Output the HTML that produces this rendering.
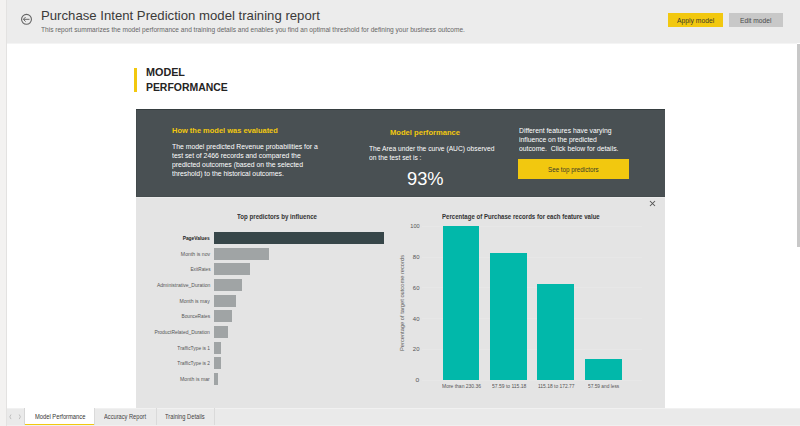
<!DOCTYPE html>
<html><head><meta charset="utf-8"><style>
html,body{margin:0;padding:0;width:800px;height:426px;overflow:hidden;background:#fff;}
body{position:relative;font-family:"Liberation Sans", sans-serif;}
.t{position:absolute;white-space:pre;}
.r{position:absolute;}
</style></head><body>
<div class="r" style="left:0.00px;top:0.00px;width:6.00px;height:426.00px;background:#f3f2f1;"></div>
<div class="r" style="left:6.00px;top:0.00px;width:1.00px;height:426.00px;background:#e3e2e1;"></div>
<div class="r" style="left:7.00px;top:0.00px;width:793.00px;height:43.00px;background:#ececec;"></div>
<div class="r" style="left:7.00px;top:43.00px;width:790.00px;height:1.00px;background:#f4f4f4;"></div>
<svg class="r" style="left:20px;top:13px" width="13" height="13" viewBox="0 0 13 13"><circle cx="6.5" cy="6.3" r="4.95" fill="none" stroke="#666" stroke-width="1.1"/><path d="M3.4 6.3H9.5M5.6 4.0L3.4 6.3L5.6 8.6" fill="none" stroke="#666" stroke-width="1"/></svg>
<div class="t" style="left:41.09px;transform-origin:left top;top:9.49px;font-size:13.60px;line-height:13.60px;color:#3b3a39;font-weight:400;transform:scaleX(0.9684);">Purchase Intent Prediction model training report</div>
<div class="t" style="left:40.79px;transform-origin:left top;top:26.32px;font-size:7.00px;line-height:7.00px;color:#666;font-weight:400;transform:scaleX(0.9384);">This report summarizes the model performance and training details and enables you find an optimal threshold for defining your business outcome.</div>
<div class="r" style="left:668.00px;top:13.00px;width:55.00px;height:14.00px;background:#f2c80f;"></div>
<div class="t" style="left:676.70px;transform-origin:left top;top:18.13px;font-size:6.70px;line-height:6.70px;color:#3a3a2a;font-weight:400;transform:scaleX(1.0133);">Apply model</div>
<div class="r" style="left:729.00px;top:13.00px;width:54.00px;height:14.00px;background:#c8c8c8;"></div>
<div class="t" style="left:739.90px;transform-origin:left top;top:18.38px;font-size:6.70px;line-height:6.70px;color:#4a4a4a;font-weight:400;transform:scaleX(0.9934);">Edit model</div>
<div class="r" style="left:797.00px;top:44.00px;width:3.00px;height:203.00px;background:#c8c8c8;"></div>
<div class="r" style="left:134.00px;top:68.00px;width:3.00px;height:24.00px;background:#f2c80f;"></div>
<div class="t" style="left:145.94px;transform-origin:left top;top:67.75px;font-size:10.45px;line-height:10.45px;color:#252423;font-weight:700;transform:scaleX(1.0338);">MODEL</div>
<div class="t" style="left:145.94px;transform-origin:left top;top:82.50px;font-size:10.45px;line-height:10.45px;color:#252423;font-weight:700;">PERFORMANCE</div>
<div class="r" style="left:136.00px;top:109.00px;width:529.00px;height:88.00px;background:#495053;"></div>
<div class="r" style="left:136.00px;top:109.00px;width:529.00px;height:1.00px;background:#363e40;"></div>
<div class="r" style="left:136.00px;top:110.00px;width:1.00px;height:87.00px;background:#42494b;"></div>
<div class="r" style="left:136.00px;top:196.00px;width:529.00px;height:1.00px;background:#454c4e;"></div>
<div class="t" style="left:172.38px;transform-origin:left top;top:127.14px;font-size:7.40px;line-height:7.40px;color:#f2c80f;font-weight:700;transform:scaleX(1.0106);">How the model was evaluated</div>
<div class="t" style="left:172.39px;transform-origin:left top;top:142.81px;font-size:7.10px;line-height:9.05px;color:#fff;font-weight:400;transform:scaleX(0.9655);">The model predicted Revenue probabilities for a
test set of 2466 records and compared the
predicted outcomes (based on the selected
threshold) to the historical outcomes.</div>
<div class="t" style="left:389.68px;transform-origin:left top;top:128.64px;font-size:7.40px;line-height:7.40px;color:#f2c80f;font-weight:700;transform:scaleX(1.0272);">Model performance</div>
<div class="t" style="left:368.79px;transform-origin:left top;top:145.37px;font-size:7.00px;line-height:8.80px;color:#fff;font-weight:400;transform:scaleX(0.9565);">The Area under the curve (AUC) observed
on the test set is :</div>
<div class="t" style="left:406.96px;transform-origin:left top;top:171.05px;font-size:17.90px;line-height:17.90px;color:#fff;font-weight:400;transform:scaleX(1.0213);">93%</div>
<div class="t" style="left:519.49px;transform-origin:left top;top:125.57px;font-size:7.00px;line-height:9.20px;color:#fff;font-weight:400;transform:scaleX(0.9718);">Different features have varying
influence on the predicted
outcome.  Click below for details.</div>
<div class="r" style="left:518.00px;top:159.00px;width:111.00px;height:20.00px;background:#f2c80f;"></div>
<div class="t" style="left:548.10px;transform-origin:left top;top:166.93px;font-size:6.70px;line-height:6.70px;color:#3a3a2a;font-weight:400;transform:scaleX(0.9341);">See top predictors</div>
<div class="r" style="left:136.00px;top:197.00px;width:529.00px;height:211.00px;background:#e4e4e4;"></div>
<div class="r" style="left:136.00px;top:197.00px;width:529.00px;height:1.00px;background:#ebebeb;"></div>
<div class="t" style="left:236.80px;transform-origin:left top;top:213.61px;font-size:6.60px;line-height:6.60px;color:#333;font-weight:700;transform:scaleX(0.9304);">Top predictors by influence</div>
<div class="r" style="left:214.00px;top:232.10px;width:170.00px;height:12.00px;background:#374649;"></div>
<div class="t" style="right:589.94px;text-align:right;transform-origin:right top;top:236.14px;font-size:5.50px;line-height:5.50px;color:#252423;font-weight:700;transform:scaleX(0.8807);">PageValues</div>
<div class="r" style="left:214.00px;top:247.74px;width:55.40px;height:12.00px;background:#a0a4a5;"></div>
<div class="t" style="right:589.94px;text-align:right;transform-origin:right top;top:251.78px;font-size:5.50px;line-height:5.50px;color:#555;font-weight:400;transform:scaleX(0.9404);">Month is nov</div>
<div class="r" style="left:214.00px;top:263.38px;width:36.00px;height:12.00px;background:#a0a4a5;"></div>
<div class="t" style="right:589.94px;text-align:right;transform-origin:right top;top:267.42px;font-size:5.50px;line-height:5.50px;color:#555;font-weight:400;transform:scaleX(0.8549);">ExitRates</div>
<div class="r" style="left:214.00px;top:279.02px;width:28.00px;height:12.00px;background:#a0a4a5;"></div>
<div class="t" style="right:589.94px;text-align:right;transform-origin:right top;top:283.06px;font-size:5.50px;line-height:5.50px;color:#555;font-weight:400;transform:scaleX(0.9150);">Administrative_Duration</div>
<div class="r" style="left:214.00px;top:294.66px;width:22.10px;height:12.00px;background:#a0a4a5;"></div>
<div class="t" style="right:589.94px;text-align:right;transform-origin:right top;top:298.70px;font-size:5.50px;line-height:5.50px;color:#555;font-weight:400;transform:scaleX(0.9270);">Month is may</div>
<div class="r" style="left:214.00px;top:310.30px;width:18.00px;height:12.00px;background:#a0a4a5;"></div>
<div class="t" style="right:589.94px;text-align:right;transform-origin:right top;top:314.34px;font-size:5.50px;line-height:5.50px;color:#555;font-weight:400;transform:scaleX(0.8637);">BounceRates</div>
<div class="r" style="left:214.00px;top:325.94px;width:13.80px;height:12.00px;background:#a0a4a5;"></div>
<div class="t" style="right:589.94px;text-align:right;transform-origin:right top;top:329.98px;font-size:5.50px;line-height:5.50px;color:#555;font-weight:400;transform:scaleX(0.8958);">ProductRelated_Duration</div>
<div class="r" style="left:214.00px;top:341.58px;width:7.20px;height:12.00px;background:#a0a4a5;"></div>
<div class="t" style="right:589.94px;text-align:right;transform-origin:right top;top:345.62px;font-size:5.50px;line-height:5.50px;color:#555;font-weight:400;transform:scaleX(0.8819);">TrafficType is 1</div>
<div class="r" style="left:214.00px;top:357.22px;width:6.50px;height:12.00px;background:#a0a4a5;"></div>
<div class="t" style="right:589.94px;text-align:right;transform-origin:right top;top:361.26px;font-size:5.50px;line-height:5.50px;color:#555;font-weight:400;transform:scaleX(0.8819);">TrafficType is 2</div>
<div class="r" style="left:214.00px;top:372.86px;width:4.00px;height:12.00px;background:#a0a4a5;"></div>
<div class="t" style="right:589.94px;text-align:right;transform-origin:right top;top:376.90px;font-size:5.50px;line-height:5.50px;color:#555;font-weight:400;transform:scaleX(0.9381);">Month is mar</div>
<div class="t" style="left:442.05px;transform-origin:left top;top:214.01px;font-size:6.60px;line-height:6.60px;color:#333;font-weight:700;transform:scaleX(0.9216);">Percentage of Purchase records for each feature value</div>
<svg class="r" style="left:648px;top:200px" width="9" height="8" viewBox="0 0 9 8"><path d="M2 1L7 6M7 1L2 6" stroke="#555" stroke-width="1.05"/></svg>
<div class="r" style="left:422.00px;top:225.75px;width:220.00px;height:1.00px;background:#e7e7e7;"></div>
<div class="t" style="right:380.53px;text-align:right;transform-origin:right top;top:224.14px;font-size:5.80px;line-height:5.80px;color:#555;font-weight:400;transform:scaleX(0.9665);">100</div>
<div class="r" style="left:422.00px;top:256.55px;width:220.00px;height:1.00px;background:#e7e7e7;"></div>
<div class="t" style="right:380.53px;text-align:right;transform-origin:right top;top:254.94px;font-size:5.80px;line-height:5.80px;color:#555;font-weight:400;transform:scaleX(1.0302);">80</div>
<div class="r" style="left:422.00px;top:287.35px;width:220.00px;height:1.00px;background:#e7e7e7;"></div>
<div class="t" style="right:380.53px;text-align:right;transform-origin:right top;top:285.74px;font-size:5.80px;line-height:5.80px;color:#555;font-weight:400;transform:scaleX(1.0302);">60</div>
<div class="r" style="left:422.00px;top:318.15px;width:220.00px;height:1.00px;background:#e7e7e7;"></div>
<div class="t" style="right:380.53px;text-align:right;transform-origin:right top;top:316.54px;font-size:5.80px;line-height:5.80px;color:#555;font-weight:400;transform:scaleX(1.0302);">40</div>
<div class="r" style="left:422.00px;top:348.95px;width:220.00px;height:1.00px;background:#e7e7e7;"></div>
<div class="t" style="right:380.53px;text-align:right;transform-origin:right top;top:347.34px;font-size:5.80px;line-height:5.80px;color:#555;font-weight:400;transform:scaleX(1.0302);">20</div>
<div class="r" style="left:422.00px;top:379.75px;width:220.00px;height:1.00px;background:#e7e7e7;"></div>
<div class="t" style="right:380.53px;text-align:right;transform-origin:right top;top:378.14px;font-size:5.80px;line-height:5.80px;color:#555;font-weight:400;transform:scaleX(1.1588);">0</div>
<div class="r" style="left:442.60px;top:226.25px;width:36.50px;height:153.95px;background:#01b8aa;"></div>
<div class="r" style="left:490.00px;top:252.75px;width:36.50px;height:127.45px;background:#01b8aa;"></div>
<div class="r" style="left:537.30px;top:284.00px;width:36.50px;height:96.20px;background:#01b8aa;"></div>
<div class="r" style="left:585.00px;top:358.80px;width:36.50px;height:21.40px;background:#01b8aa;"></div>
<div class="t" style="left:442.13px;transform-origin:left top;top:383.64px;font-size:5.50px;line-height:5.50px;color:#555;font-weight:400;transform:scaleX(0.9050);">More than 230.36</div>
<div class="t" style="left:491.83px;transform-origin:left top;top:383.64px;font-size:5.50px;line-height:5.50px;color:#555;font-weight:400;transform:scaleX(0.9075);">57.59 to 115.18</div>
<div class="t" style="left:538.34px;transform-origin:left top;top:383.64px;font-size:5.50px;line-height:5.50px;color:#555;font-weight:400;transform:scaleX(0.8934);">115.18 to 172.77</div>
<div class="t" style="left:588.34px;transform-origin:left top;top:383.64px;font-size:5.50px;line-height:5.50px;color:#555;font-weight:400;transform:scaleX(0.8728);">57.59 and less</div>
<div class="t" style="left:353.5px;top:299.7px;width:96px;height:6px;text-align:center;font-size:5.6px;line-height:6px;color:#605e5c;transform:rotate(-90deg) scaleX(1.0223);">Percentage of target outcome records</div>
<div class="r" style="left:7.00px;top:408.00px;width:793.00px;height:18.00px;background:#eaeaea;"></div>
<div class="r" style="left:7.00px;top:408.00px;width:793.00px;height:1.00px;background:#f1f1f1;"></div>
<svg class="r" style="left:7px;top:412px" width="17" height="10" viewBox="0 0 17 10"><path d="M4 2.5L2.8 4.8L4 7.1M12.2 2.5L13.4 4.8L12.2 7.1" fill="none" stroke="#b4b4b4" stroke-width="0.8"/></svg>
<div class="r" style="left:24.00px;top:408.00px;width:70.40px;height:17.00px;background:#fff;"></div>
<div class="r" style="left:24.00px;top:408.00px;width:1.00px;height:18.00px;background:#d6d6d6;"></div>
<div class="r" style="left:25.00px;top:424.00px;width:69.40px;height:1.20px;background:#f2c80f;"></div>
<div class="r" style="left:7.00px;top:425.20px;width:793.00px;height:0.80px;background:#f0f0f0;"></div>
<div class="t" style="left:34.81px;transform-origin:left top;top:414.27px;font-size:6.30px;line-height:6.30px;color:#333;font-weight:400;transform:scaleX(0.9167);">Model Performance</div>
<div class="r" style="left:94.40px;top:408.00px;width:1.00px;height:17.00px;background:#dadada;"></div>
<div class="r" style="left:155.70px;top:408.00px;width:1.00px;height:17.00px;background:#dadada;"></div>
<div class="r" style="left:213.80px;top:408.00px;width:1.00px;height:17.00px;background:#dadada;"></div>
<div class="t" style="left:104.11px;transform-origin:left top;top:414.27px;font-size:6.30px;line-height:6.30px;color:#444;font-weight:400;transform:scaleX(0.9040);">Accuracy Report</div>
<div class="t" style="left:165.01px;transform-origin:left top;top:414.27px;font-size:6.30px;line-height:6.30px;color:#444;font-weight:400;transform:scaleX(0.9095);">Training Details</div>
</body></html>
